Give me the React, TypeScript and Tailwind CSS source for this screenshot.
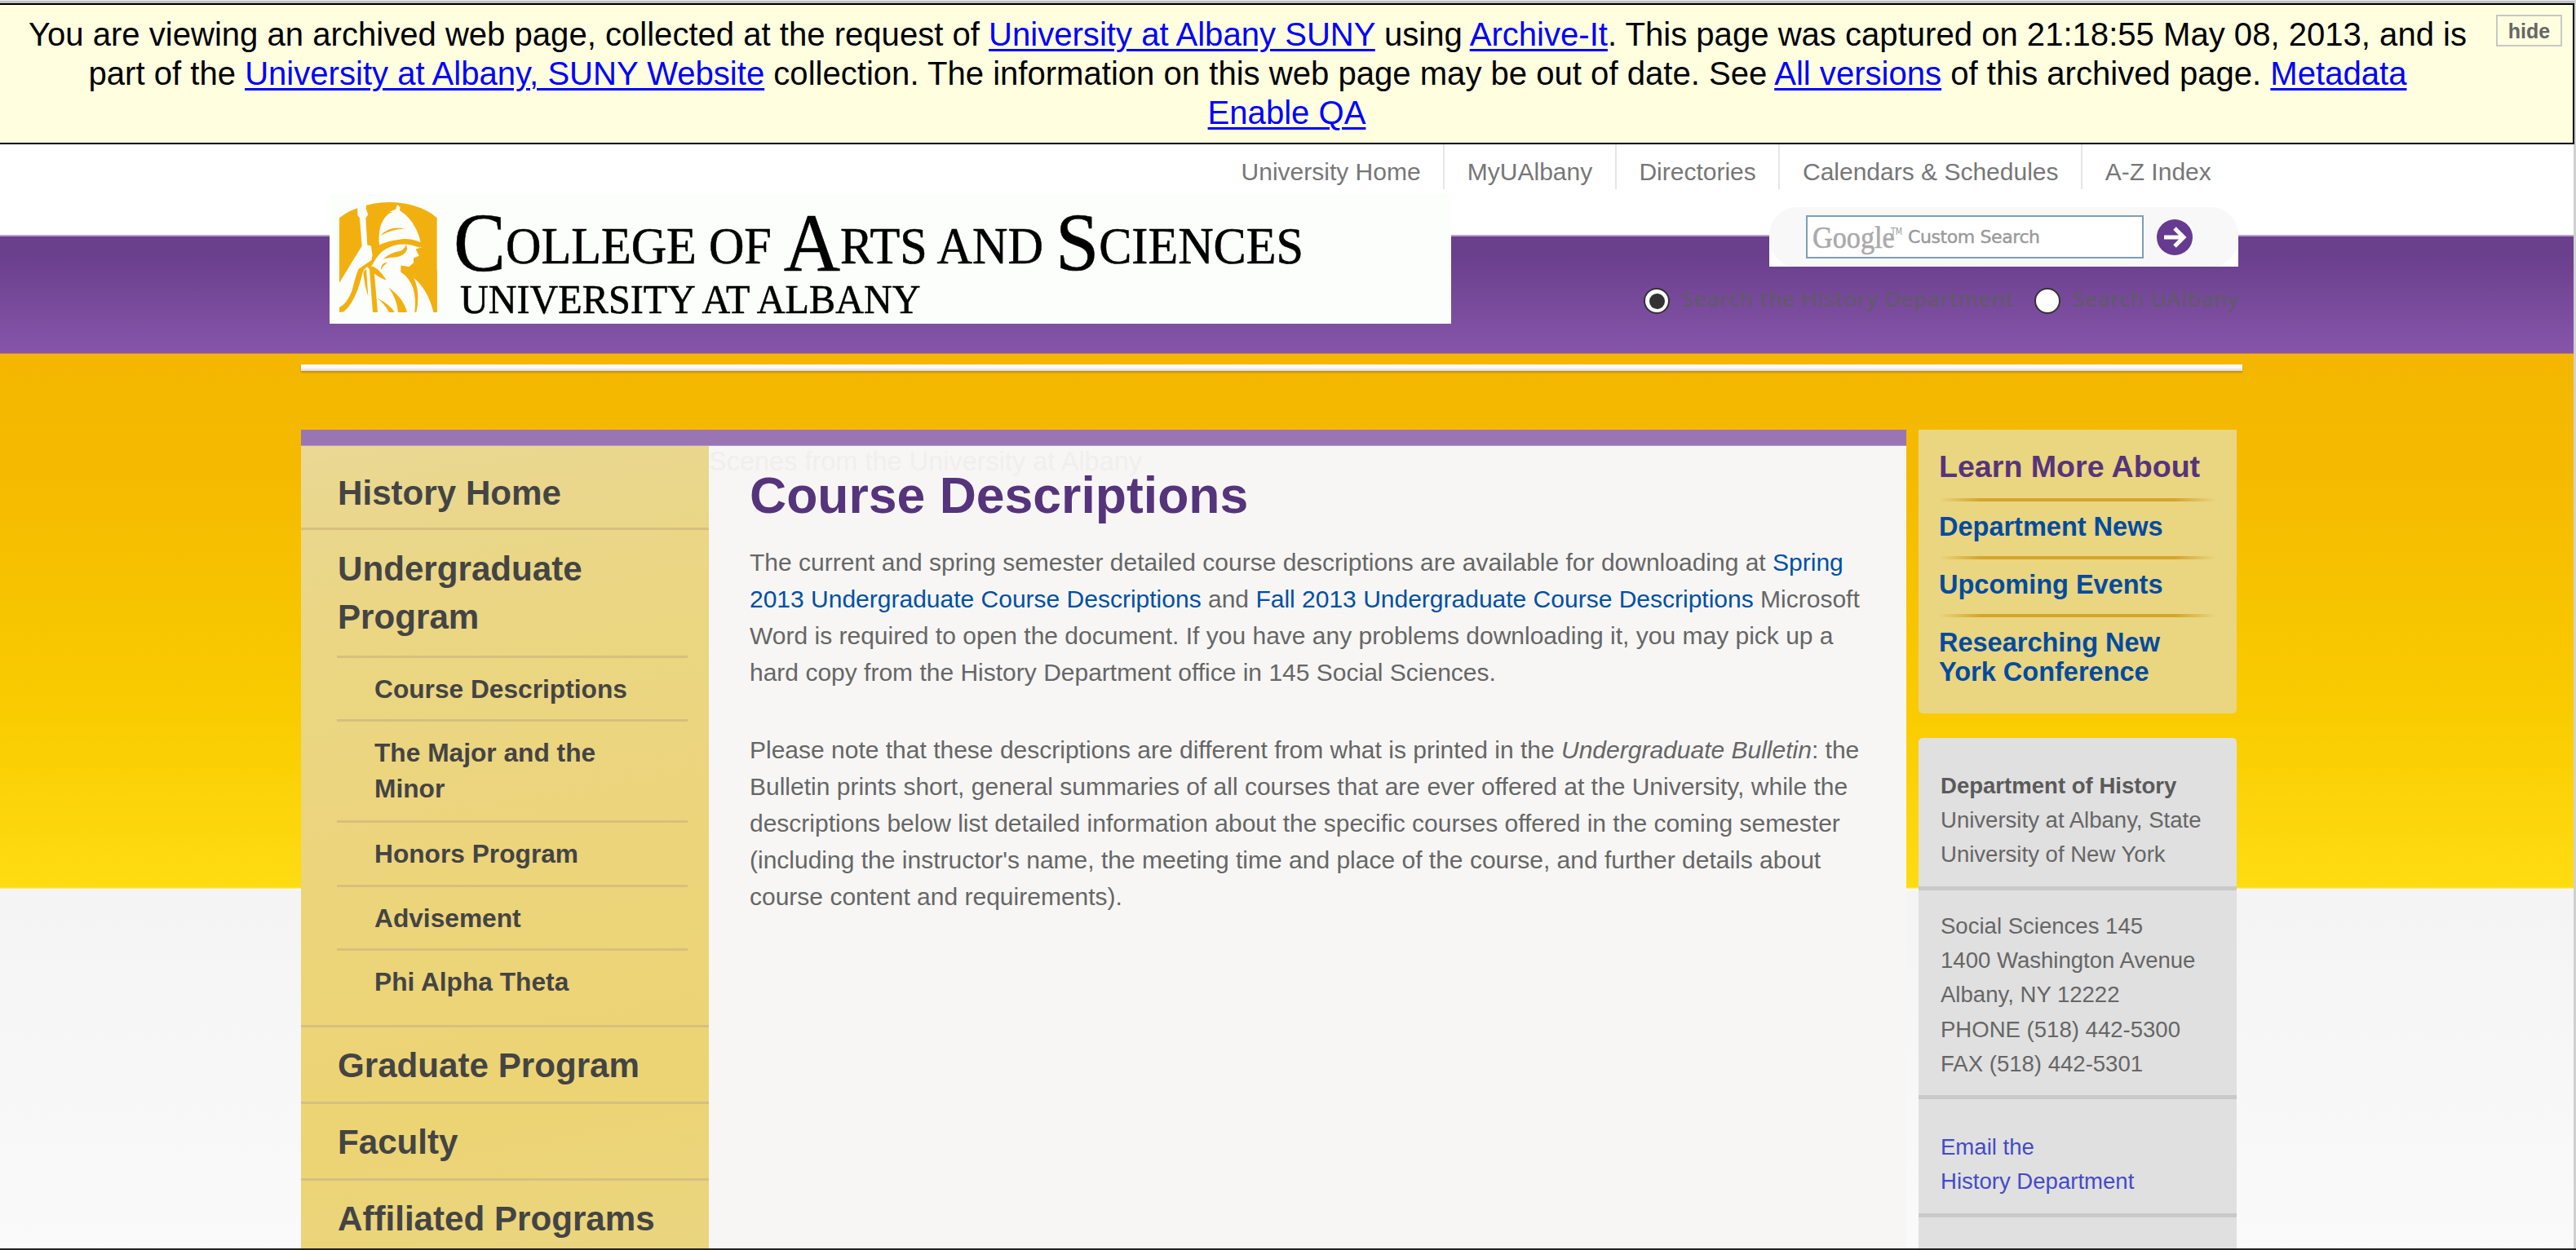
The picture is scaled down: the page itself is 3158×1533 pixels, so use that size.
import React from "react";

const Link = ({ children }: { children: React.ReactNode }) => (
  <a className="text-[#0000ff] underline decoration-[3px] underline-offset-[4px]">{children}</a>
);

function Banner() {
  return (
    <div className="shrink-0 h-[177px] w-[3156px] border-t border-[#e8e8e8] bg-[#c0c0c0] pt-[3px]">
      <div className="relative h-[173px] border-y-2 border-r-2 border-black bg-[#ffffe0] pt-[12px] pr-[98px] pl-0">
        <p className="w-[3059px] text-center text-[40.08px] leading-[48px] whitespace-nowrap text-black">
          You are viewing an archived web page, collected at the request of <Link>University at Albany SUNY</Link> using{" "}
          <Link>Archive-It</Link>. This page was captured on 21:18:55 May 08, 2013, and is
          <br />
          part of the <Link>University at Albany, SUNY Website</Link> collection. The information on this web page may be out of
          date. See <Link>All versions</Link> of this archived page. <Link>Metadata</Link>
          <br />
          <span className="relative left-[48px]"><Link>Enable QA</Link></span>
        </p>
        <button className="absolute top-[12px] right-[13px] h-[39px] w-[81px] border-2 border-[#c8c8c8] text-[25px] leading-[34px] font-bold text-[#666666]">
          hide
        </button>
      </div>
    </div>
  );
}

function Seal() {
  return (
    <svg className="mt-[10px] ml-[12px] h-[135px] w-[120px] shrink-0" viewBox="49 42 360 406" preserveAspectRatio="none">
      <path fill="#f2b010" d="M49 100 Q85 72 118 63 Q175 42 230 42 Q300 42 360 68 Q390 82 408 100 V448 H49 Z" />
      <g fill="#fcfefc">
        <path d="M116 60 L148 52 L147 66 L155 88 L146 100 L152 200 L166 204 L172 250 L130 290 L49 342 L110 240 L132 204 L124 100 L116 90 Z" />
        <path d="M49 340 L110 240 L172 245 Q215 205 290 190 L352 208 L330 215 L342 240 L322 248 L322 265 L305 280 L277 276 L276 298 L310 312 Q370 350 396 449 H48 Z" />
        <path d="M196 200 Q188 120 230 85 L245 78 L232 77 L256 68 L262 52 L273 60 L271 72 Q330 110 348 190 Q310 172 265 180 Q225 185 196 200 Z" />
      </g>
      <g fill="#f2b010">
        <path d="M200 165 Q235 128 290 140 Q240 142 200 165 Z" />
        <path d="M168 245 Q215 182 300 180 L352 194 L346 210 L310 199 Q250 190 205 225 Q180 250 170 276 Z" />
        <path d="M210 252 Q235 228 275 222 Q290 214 295 198 L299 215 Q290 240 260 244 Q235 245 210 252 Z" />
        <path d="M202 292 Q200 266 226 264 Q210 275 202 292 Z" />
        <path d="M150 276 Q188 272 222 330 Q195 320 178 305 L190 448 H172 L160 290 Z" />
        <path d="M120 288 L175 250 L168 276 Q145 278 135 300 Q110 410 65 446 L49 448 V430 Q75 420 95 370 Q110 310 120 288 Z" />
        <path d="M137 300 L148 288 L155 390 Q142 350 137 300 Z" />
        <path d="M230 357 Q285 395 298 448 H265 Q262 400 230 357 Z" />
        <path d="M187 395 Q238 420 252 448 H232 Q215 415 187 395 Z" />
        <path d="M275 276 L305 280 L300 300 L318 312 Q350 370 332 448 H326 Q338 340 275 300 Z" />
        <path d="M318 310 Q380 360 396 448 H408 V290 Z" />
      </g>
    </svg>
  );
}

const Cap = ({ children }: { children: string }) => (
  <span className="relative top-[9px] text-[102px] leading-none">{children}</span>
);

function Header() {
  const links = ["University Home", "MyUAlbany", "Directories", "Calendars & Schedules"];
  return (
    <header className="flex h-[257px] shrink-0 bg-[linear-gradient(#fff_0px,#fff_111px,#b8a4c8_111px,#b8a4c8_113px,#6a3f8c_113px,#6a3f8c_135px,#8655aa_256px,#c17b55_256px)]">
      <div className="mt-[61px] ml-[404px] flex h-[159px] w-[1375px] shrink-0 bg-[#fcfefc]">
        <Seal />
        <div className="ml-[20px] font-['Liberation_Serif'] whitespace-nowrap text-black [-webkit-text-stroke:0.6px_black]">
          <div className="h-[82px] w-[1040px] origin-left scale-x-[0.94] text-[64px] leading-[84px]">
            <Cap>C</Cap>OLLEGE OF <Cap>A</Cap>RTS AND <Cap>S</Cap>CIENCES
          </div>
          <div className="mt-[17px] ml-[8px] w-[700px] origin-left scale-x-[0.963] text-[50px] leading-[60px]">UNIVERSITY AT ALBANY</div>
        </div>
      </div>
      <div className="-ml-[285px] w-[1290px]">
        <nav className="flex h-[55px] text-[30px] leading-[67px] whitespace-nowrap text-[#777]">
          {links.map((l) => (
            <a key={l} className="mr-0 border-r-2 border-[#e6e6e6] px-[27.6px]">{l}</a>
          ))}
          <a className="pl-[27.6px]">A-Z Index</a>
        </nav>
        <div className="mt-[22px] ml-[675px] h-[73px] w-[575px] bg-[linear-gradient(transparent_0_34px,#fff_34px)]">
          <div className="flex h-[73px] rounded-[34px] bg-[#f8f8f8] pt-[10px] pl-[45px]">
            <div className="flex h-[53px] w-[414px] items-center border-2 border-[#7f9db9] bg-white pl-[6px] whitespace-nowrap text-[#999]">
              <span className="w-[96px] origin-left scale-x-[0.9] font-['Liberation_Serif'] text-[38px] leading-none text-[#aaa] [-webkit-text-stroke:0.6px_#aaa]">Google</span>
              <span className="mb-[14px] w-[17px] origin-left scale-x-[0.8] font-['DejaVu_Sans'] text-[12px]">TM</span>
              <span className="ml-[4px] font-['DejaVu_Sans'] text-[22px] tracking-[-0.4px] [-webkit-text-stroke:0.4px_#999]">Custom Search</span>
            </div>
            <svg className="mt-[4px] ml-[15px] h-[46px] w-[46px]" viewBox="0 0 46 46">
              <circle cx="23" cy="23" r="22" fill="#663a90" />
              <path d="M10 23H33M23 12L34 23L23 34" fill="none" stroke="#fff" strokeWidth="5" />
            </svg>
          </div>
        </div>
        <div className="mt-[25px] ml-[521px] flex items-center font-['Noto_Sans'] text-[26px] leading-[34px] tracking-[0.97px] whitespace-nowrap text-[#5e5c64]">
          <span className="mr-[15px] flex size-[32px] items-center justify-center rounded-full border-2 border-[#333] bg-white">
            <span className="size-[19px] rounded-full bg-[#333]" />
          </span>
          <span className="relative -top-[3px] w-[432px]">Search the History Department</span>
          <span className="mr-[15px] size-[32px] rounded-full border-2 border-[#333] bg-white" />
          <span className="relative -top-[3px]">Search UAlbany</span>
        </div>
      </div>
    </header>
  );
}

const subItems = [
  ["Course Descriptions", "h-[78px]"],
  ["The Major and the Minor", "h-[124px]"],
  ["Honors Program", "h-[79px]"],
  ["Advisement", "h-[78px]"],
  ["Phi Alpha Theta", "h-[92px]"],
];

function Sidebar() {
  return (
    <aside className="w-[500px] shrink-0 bg-[linear-gradient(170deg,#ead894_0%,#ead684_20%,#ecd47a_55%,#ecd474_80%,#ead580_100%)] font-bold text-[#444]">
      <div className="h-[103px] border-b-[3px] border-[#d6bf80] pt-[28px] pl-[45px] text-[42.15px] leading-[59px]">History Home</div>
      <div className="h-[610px] border-b-[3px] border-[#d6bf80] pt-[18px]">
        <div className="pl-[45px] text-[42.15px] leading-[59px]">
          Undergraduate
          <br />
          Program
        </div>
        <ul className="mt-[18px] ml-[44px] w-[430px]">
          {subItems.map(([label, h]) => (
            <li key={label} className={"border-t-[3px] border-[#d6bf80] pt-[16px] pl-[46px] text-[31.7px] leading-[44px] " + h}>
              <div className="w-[330px]">{label}</div>
            </li>
          ))}
        </ul>
      </div>
      {["Graduate Program", "Faculty", "Affiliated Programs"].map((t) => (
        <div key={t} className="h-[94px] border-b-[3px] border-[#d6bf80] pt-[17px] pl-[45px] text-[42.15px] leading-[59px]">{t}</div>
      ))}
    </aside>
  );
}

function Content() {
  return (
    <main className="relative w-[1468px] shrink-0 bg-[#f7f6f5] pl-[50px] text-[30px] leading-[45px] whitespace-nowrap text-[#666]">
      <div className="absolute -top-[3px] left-0 h-[38px] text-[32.5px] text-[#f0efee]">Scenes from the University at Albany</div>
      <h1 className="pt-[24px] text-[62.5px] leading-[72px] font-bold text-[#56347c]">Course Descriptions</h1>
      <p className="mt-[24px]">
        The current and spring semester detailed course descriptions are available for downloading at <a className="text-[#0050a4]">Spring</a>
        <br />
        <a className="text-[#0050a4]">2013 Undergraduate Course Descriptions</a> and{" "}
        <a className="text-[#0050a4]">Fall 2013 Undergraduate Course Descriptions</a> Microsoft
        <br />
        Word is required to open the document. If you have any problems downloading it, you may pick up a
        <br />
        hard copy from the History Department office in 145 Social Sciences.
      </p>
      <p className="mt-[50px]">
        Please note that these descriptions are different from what is printed in the <i>Undergraduate Bulletin</i>: the
        <br />
        Bulletin prints short, general summaries of all courses that are ever offered at the University, while the
        <br />
        descriptions below list detailed information about the specific courses offered in the coming semester
        <br />
        (including the instructor's name, the meeting time and place of the course, and further details about
        <br />
        course content and requirements).
      </p>
    </main>
  );
}

const Rule = () => <div className="h-[4px] w-[340px] bg-[linear-gradient(90deg,transparent,#d4a52c_15%,#d4a52c_85%,transparent)]" />;

function RightColumn() {
  return (
    <div className="w-[390px] shrink-0 whitespace-nowrap">
      <section className="h-[348px] rounded-b-[5px] bg-[#ead580] pl-[25px] font-bold text-[#004ba0]">
        <h2 className="h-[84px] pt-[23px] text-[37.6px] leading-[44px] text-[#56347c]">Learn More About</h2>
        <Rule />
        <div className="h-[67px] pt-[13px] text-[32.5px] leading-[36px]">Department News</div>
        <Rule />
        <div className="h-[67px] pt-[13px] text-[32.5px] leading-[36px]">Upcoming Events</div>
        <Rule />
        <div className="pt-[13px] text-[32.5px] leading-[36px]">Researching New<br />York Conference</div>
      </section>
      <section className="mt-[30px] h-[626px] rounded-t-[5px] bg-[#e0e0e0] text-[27.55px] leading-[42.2px] text-[#666]">
        <div className="h-[187px] border-b-[5px] border-[#c9c9c9] pt-[38px] pl-[27px]">
          <b className="text-[#5a5a5a]">Department of History</b><br />University at Albany, State<br />University of New York
        </div>
        <div className="h-[256px] border-b-[5px] border-[#c9c9c9] pt-[23px] pl-[27px]">
          Social Sciences 145<br />1400 Washington Avenue<br />Albany, NY 12222<br />PHONE (518) 442-5300<br />FAX (518) 442-5301
        </div>
        <div className="h-[145px] border-b-[5px] border-[#c9c9c9] pt-[38px] pl-[27px] text-[#444bc8]">Email the<br />History Department</div>
      </section>
    </div>
  );
}

export default function App() {
  return (
    <div className="relative flex h-[1533px] w-[3158px] flex-col overflow-hidden bg-[#d0d0d0] font-['Liberation_Sans',Arial,sans-serif]">
      <Banner />
      <div className="flex h-[1354px] w-[3155px] shrink-0 flex-col overflow-hidden bg-[linear-gradient(#f4b600_257px,#f5ba00_400px,#f9cc00_700px,#fedc12_911px,#fff_914px,#f4f4f4_915px,#fafafa_1354px)]">
        <Header />
        <div className="mt-[13px] ml-[369px] h-[8px] w-[2380px] shrink-0 bg-[linear-gradient(#fff_40%,#d8d8d8)] shadow-[0_2px_2px_#c88c10]" />
        <div className="mt-[72px] ml-[369px] flex">
          <div className="w-[1968px]">
            <div className="h-[20px] border-b border-[#b795cc] bg-[#9a75b3]" />
            <div className="flex h-[990px]">
              <Sidebar />
              <Content />
            </div>
          </div>
          <div className="ml-[15px]">
            <RightColumn />
          </div>
        </div>
      </div>
      <div className="h-[2px] w-full bg-[#222]" />
    </div>
  );
}
